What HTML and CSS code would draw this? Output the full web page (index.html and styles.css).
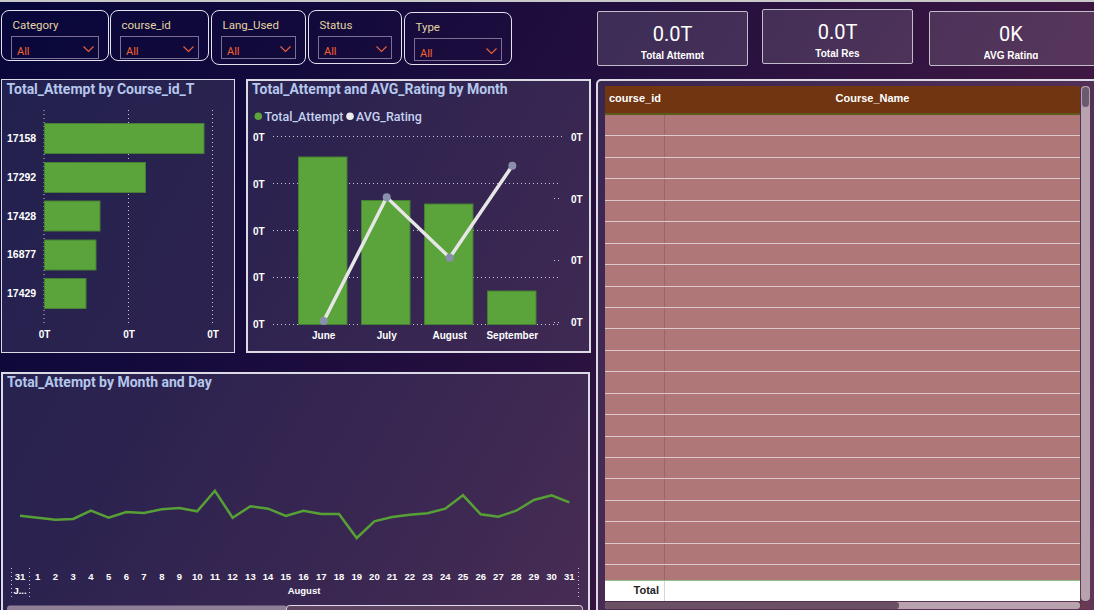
FILE: index.html
```html
<!DOCTYPE html>
<html>
<head>
<meta charset="utf-8">
<link rel="stylesheet" href="styles.css">
</head>
<body>
<div class="topline"></div>
<div class="top">
  <div class="slicer s1"><div class="slabel">Category</div><div class="dd"><span>All</span><svg class="chev" width="11" height="7" viewBox="0 0 11 7"><path d="M0.5 0.5 L5.5 5.5 L10.5 0.5"/></svg></div></div>
  <div class="slicer s2"><div class="slabel">course_id</div><div class="dd"><span>All</span><svg class="chev" width="11" height="7" viewBox="0 0 11 7"><path d="M0.5 0.5 L5.5 5.5 L10.5 0.5"/></svg></div></div>
  <div class="slicer s3"><div class="slabel">Lang_Used</div><div class="dd"><span>All</span><svg class="chev" width="11" height="7" viewBox="0 0 11 7"><path d="M0.5 0.5 L5.5 5.5 L10.5 0.5"/></svg></div></div>
  <div class="slicer s4"><div class="slabel">Status</div><div class="dd"><span>All</span><svg class="chev" width="11" height="7" viewBox="0 0 11 7"><path d="M0.5 0.5 L5.5 5.5 L10.5 0.5"/></svg></div></div>
  <div class="slicer s5"><div class="slabel">Type</div><div class="dd"><span>All</span><svg class="chev" width="11" height="7" viewBox="0 0 11 7"><path d="M0.5 0.5 L5.5 5.5 L10.5 0.5"/></svg></div></div>
  <div class="kpi k1"><div class="kval">0.0T</div><div class="klab">Total Attempt</div></div>
  <div class="kpi k2"><div class="kval">0.0T</div><div class="klab">Total Res</div></div>
  <div class="kpi k3"><div class="kval">0K</div><div class="klab">AVG Rating</div></div>
</div>

<div class="main">
  <div class="left">
    <div class="row1">
      <div class="panel c1">
        <div class="ptitle">Total_Attempt by Course_id_T</div>
        <svg class="plot" width="230" height="250" viewBox="0 0 230 250">
          <g class="grid">
            <line x1="42" y1="10" x2="42" y2="226"/>
            <line x1="126.5" y1="10" x2="126.5" y2="226"/>
            <line x1="210.5" y1="10" x2="210.5" y2="226"/>
          </g>
          <g class="bar">
            <rect x="42.5" y="23.5" width="159.5" height="30"/>
            <rect x="42.5" y="62.5" width="101" height="30"/>
            <rect x="42.5" y="101" width="55.5" height="30"/>
            <rect x="42.5" y="140" width="51.5" height="30"/>
            <rect x="42.5" y="178.5" width="41.5" height="30"/>
          </g>
          <g class="ylab">
            <text x="5" y="42">17158</text>
            <text x="5" y="81">17292</text>
            <text x="5" y="120">17428</text>
            <text x="5" y="158">16877</text>
            <text x="5" y="197">17429</text>
          </g>
          <g class="xlab">
            <text x="42.5" y="238">0T</text>
            <text x="127" y="238">0T</text>
            <text x="211" y="238">0T</text>
          </g>
        </svg>
      </div>
      <div class="panel c2">
        <div class="ptitle">Total_Attempt and AVG_Rating by Month</div>
        <svg class="plot" width="341" height="250" viewBox="0 0 341 250">
          <circle cx="10.3" cy="15.3" r="3.8" fill="#5ba33b"/>
          <text class="legend" x="16.5" y="19.6">Total_Attempt</text>
          <circle cx="102" cy="15.3" r="3.8" fill="#ececec"/>
          <text class="legend" x="108" y="19.6">AVG_Rating</text>
          <g class="grid">
            <line x1="25" y1="35.5" x2="315" y2="35.5"/>
            <line x1="25" y1="82.5" x2="313" y2="82.5"/>
            <line x1="25" y1="129.5" x2="313" y2="129.5"/>
            <line x1="25" y1="176.5" x2="313" y2="176.5"/>
            <line x1="25" y1="223.5" x2="313" y2="223.5"/>
            <line x1="306" y1="97.5" x2="313" y2="97.5"/>
            <line x1="306" y1="159.5" x2="313" y2="159.5"/>
            <line x1="306" y1="221.5" x2="313" y2="221.5"/>
          </g>
          <g class="ylab">
            <text x="5" y="40">0T</text>
            <text x="5" y="87">0T</text>
            <text x="5" y="134">0T</text>
            <text x="5" y="180">0T</text>
            <text x="5" y="227">0T</text>
            <text x="323" y="40">0T</text>
            <text x="323" y="101.5">0T</text>
            <text x="323" y="163">0T</text>
            <text x="323" y="225">0T</text>
          </g>
          <g class="bar">
            <rect x="50.5" y="56" width="48.5" height="167.5"/>
            <rect x="113.5" y="99.5" width="48.5" height="124"/>
            <rect x="176.5" y="103" width="48.5" height="120.5"/>
            <rect x="239.5" y="190" width="48.5" height="33.5"/>
          </g>
          <polyline class="rline" points="75.7,220 138.7,96.3 201.7,156.7 264.3,64.7"/>
          <g class="rdot">
            <circle cx="75.7" cy="220" r="4"/>
            <circle cx="138.7" cy="96.3" r="4"/>
            <circle cx="201.7" cy="156.7" r="4"/>
            <circle cx="264.3" cy="64.7" r="4"/>
          </g>
          <g class="xlab">
            <text x="75.7" y="237.5">June</text>
            <text x="138.7" y="237.5">July</text>
            <text x="201.7" y="237.5">August</text>
            <text x="264.3" y="237.5">September</text>
          </g>
        </svg>
      </div>
    </div>
    <div class="panel c3">
      <div class="ptitle">Total_Attempt by Month and Day</div>
      <svg class="plot" width="585" height="216" viewBox="0 0 585 216">
        <polyline class="gline" points="17,121.7 34.7,123.7 52.4,125.7 70.2,125 87.9,116.7 105.6,123.7 123.3,118 141,119 158.8,115.3 176.5,114 194.2,117.3 211.9,96.7 229.6,123.7 247.4,112.3 265.1,114.7 282.8,122 300.5,116.7 318.2,120 336,120 353.7,144 371.4,127.3 389.1,123 406.8,120.7 424.6,119.3 442.3,114.7 460,101.3 477.7,120.3 495.4,122.7 513.2,116.7 530.9,106 548.6,101.3 566.3,108.3"/>
        <g class="grid">
          <line x1="8.5" y1="174" x2="8.5" y2="206"/>
          <line x1="26.5" y1="174" x2="26.5" y2="206"/>
          <line x1="575.5" y1="174" x2="575.5" y2="206"/>
        </g>
        <g class="dlab">
          <text x="17" y="185.5">31</text><text x="34.7" y="185.5">1</text><text x="52.4" y="185.5">2</text><text x="70.2" y="185.5">3</text>
          <text x="87.9" y="185.5">4</text><text x="105.6" y="185.5">5</text><text x="123.3" y="185.5">6</text><text x="141" y="185.5">7</text>
          <text x="158.8" y="185.5">8</text><text x="176.5" y="185.5">9</text><text x="194.2" y="185.5">10</text><text x="211.9" y="185.5">11</text>
          <text x="229.6" y="185.5">12</text><text x="247.4" y="185.5">13</text><text x="265.1" y="185.5">14</text><text x="282.8" y="185.5">15</text>
          <text x="300.5" y="185.5">16</text><text x="318.2" y="185.5">17</text><text x="336" y="185.5">18</text><text x="353.7" y="185.5">19</text>
          <text x="371.4" y="185.5">20</text><text x="389.1" y="185.5">21</text><text x="406.8" y="185.5">22</text><text x="424.6" y="185.5">23</text>
          <text x="442.3" y="185.5">24</text><text x="460" y="185.5">25</text><text x="477.7" y="185.5">26</text><text x="495.4" y="185.5">27</text>
          <text x="513.2" y="185.5">28</text><text x="530.9" y="185.5">29</text><text x="548.6" y="185.5">30</text><text x="566.3" y="185.5">31</text>
          <text x="17" y="199.5">J...</text>
          <text x="301" y="199.5">August</text>
        </g>
        <rect class="sb1" x="4" y="211.5" width="280" height="10" rx="3"/>
        <rect class="sb2" x="283.5" y="211.5" width="296" height="10" rx="3"/>
      </svg>
    </div>
  </div>

  <div class="panel tbl">
    <div class="tgrid">
      <div class="table">
        <div class="thead"><div class="col1">course_id</div><div class="col2">Course_Name</div></div>
        <div class="tbody">
          <div class="trow"><div class="col1"></div><div class="col2"></div></div>
          <div class="trow"><div class="col1"></div><div class="col2"></div></div>
          <div class="trow"><div class="col1"></div><div class="col2"></div></div>
          <div class="trow"><div class="col1"></div><div class="col2"></div></div>
          <div class="trow"><div class="col1"></div><div class="col2"></div></div>
          <div class="trow"><div class="col1"></div><div class="col2"></div></div>
          <div class="trow"><div class="col1"></div><div class="col2"></div></div>
          <div class="trow"><div class="col1"></div><div class="col2"></div></div>
          <div class="trow"><div class="col1"></div><div class="col2"></div></div>
          <div class="trow"><div class="col1"></div><div class="col2"></div></div>
          <div class="trow"><div class="col1"></div><div class="col2"></div></div>
          <div class="trow"><div class="col1"></div><div class="col2"></div></div>
          <div class="trow"><div class="col1"></div><div class="col2"></div></div>
          <div class="trow"><div class="col1"></div><div class="col2"></div></div>
          <div class="trow"><div class="col1"></div><div class="col2"></div></div>
          <div class="trow"><div class="col1"></div><div class="col2"></div></div>
          <div class="trow"><div class="col1"></div><div class="col2"></div></div>
          <div class="trow"><div class="col1"></div><div class="col2"></div></div>
          <div class="trow"><div class="col1"></div><div class="col2"></div></div>
          <div class="trow"><div class="col1"></div><div class="col2"></div></div>
          <div class="trow"><div class="col1"></div><div class="col2"></div></div>
          <div class="trow"><div class="col1"></div><div class="col2"></div></div>
        </div>
        <div class="ttotal"><div class="col1">Total</div><div class="col2"></div></div>
      </div>
      <div class="vscroll"><div class="vthumb"></div></div>
      <div class="hscroll"><div class="hthumb"></div></div>
      <div class="corner"></div>
    </div>
  </div>
</div>
</body>
</html>
```

FILE: styles.css
```css
* { box-sizing: border-box; }
html, body { margin: 0; padding: 0; }
body {
  width: 1094px;
  height: 610px;
  overflow: hidden;
  font-family: Roboto, "Liberation Sans", sans-serif;
  background: linear-gradient(120deg, #08073a 0%, #140a3c 25%, #26103f 50%, #3c1742 75%, #4e1f45 100%);
  color: #fff;
}
.topline { height: 2px; background: #c9c9c9; }

.top {
  height: 77px;
  display: flex;
  align-items: flex-start;
  padding-left: 1px;
}
.top > * { flex: none; }
.slicer {
  border: 1.5px solid #e4e2ec;
  border-radius: 8px;
  padding-top: 7px;
  display: flex;
  flex-direction: column;
  margin-top: 8px;
}
.s1 { width: 108px; height: 51px; }
.s2 { width: 99px; height: 51px; margin-left: 1px; }
.s3 { width: 95px; height: 55px; margin-left: 2px; }
.s4 { width: 94px; height: 54px; margin-left: 2px; }
.s5 { width: 108px; height: 53px; margin-left: 2px; margin-top: 10px; }
.slabel {
  height: 14px;
  line-height: 14px;
  font-size: 11.5px;
  color: #e3d4a2;
  padding-left: 10.5px;
}
.dd {
  margin: 4px 9px 0 9px;
  height: 23px;
  border: 1px solid #7d6f94;
  display: flex;
  justify-content: space-between;
  align-items: flex-start;
  padding: 8px 4px 0 5px;
}
.dd span { font-size: 11px; line-height: 13px; color: #f4622e; }
.chev { margin-top: 1px; }
.chev path { fill: none; stroke: #e8603c; stroke-width: 1.2; }

.kpi {
  width: 151px;
  height: 55px;
  border: 1.5px solid #c3bccb;
  border-radius: 2px;
  background: rgba(255, 255, 255, 0.13);
  margin-top: 9px;
  padding-top: 9.5px;
  display: flex;
  flex-direction: column;
  align-items: center;
}
.k1 { margin-left: 85px; }
.k2 { margin-left: 14px; margin-top: 7px; }
.k3 { margin-left: 16px; width: 170px; padding-right: 6px; }
.kval { font-size: 20px; line-height: 24px; height: 24px; color: #fff; }
.klab {
  margin-top: 4px;
  height: 9.5px;
  overflow: hidden;
  font-family: "Liberation Sans", Arial, sans-serif;
  font-weight: 700;
  font-size: 10px;
  line-height: 12px;
  color: #fff;
}

.main { display: flex; align-items: flex-start; }
.main > * { flex: none; }
.left { margin-left: 1px; width: 590px; display: flex; flex-direction: column; }
.row1 { display: flex; gap: 11px; height: 274px; }
.row1 > * { flex: none; }
.panel {
  border: 2px solid #dcdae4;
  background: rgba(255, 255, 255, 0.1);
  display: flex;
  flex-direction: column;
  overflow: hidden;
}
.c1 { width: 234px; height: 274px; border-width: 1.5px; }
.c2 { width: 345px; height: 274px; }
.c3 { width: 589px; height: 240px; margin-top: 19px; }
.ptitle {
  height: 20px;
  line-height: 16px;
  padding: 0 4px;
  font-weight: 700;
  font-size: 14px;
  color: #b5c7ec;
  white-space: nowrap;
  flex: none;
}
.c1 .ptitle { padding-left: 4.5px; padding-top: 0.5px; }
.plot { display: block; flex: none; overflow: visible; }

.grid line { stroke: #c8c6d6; stroke-width: 1; stroke-dasharray: 1 3; }
.bar rect { fill: #5ba33b; stroke: #467f33; stroke-width: 1; }
.ylab text {
  font-family: "Liberation Sans", Arial, sans-serif;
  font-weight: 700;
  font-size: 10.5px;
  fill: #fff;
}
.c2 .ylab text { font-size: 10px; }
.xlab text {
  font-family: "Liberation Sans", Arial, sans-serif;
  font-weight: 700;
  font-size: 10px;
  fill: #fff;
  text-anchor: middle;
}
.legend {
  font-family: Roboto, sans-serif;
  font-weight: 500;
  font-size: 12.5px;
  fill: #c4d2f0;
}
.rline { fill: none; stroke: #e6e6e6; stroke-width: 3.5; stroke-linejoin: miter; }
.rdot circle { fill: #8a8fae; }
.gline { fill: none; stroke: #57a035; stroke-width: 2.5; stroke-linejoin: miter; }
.dlab text {
  font-family: "Liberation Sans", Arial, sans-serif;
  font-weight: 700;
  font-size: 9.5px;
  fill: #fff;
  text-anchor: middle;
}
.sb1 { fill: #8e7f97; }
.sb2 { fill: #5e4662; stroke: #e2dce8; stroke-width: 1; }

.tbl {
  margin-left: 5px;
  width: 502px;
  height: 533px;
  border-radius: 5px 0 0 0;
  padding: 5px 0 0 7px;
}
.tgrid {
  display: grid;
  grid-template-columns: 475px 9px;
  grid-template-rows: 515px 7px;
  column-gap: 1px;
  row-gap: 1px;
}
.table { display: flex; flex-direction: column; font-family: "Liberation Sans", Arial, sans-serif; }
.thead {
  height: 29px;
  background: #713511;
  border-bottom: 2px solid #5c5a1c;
  display: flex;
  font-weight: 700;
  font-size: 11px;
  color: #fff;
  flex: none;
}
.thead .col1 { width: 60px; padding: 5px 0 0 4px; line-height: 14px; }
.thead .col2 { flex: 1; text-align: center; padding-top: 5px; line-height: 14px; }
.tbody {
  height: 465px;
  overflow: hidden;
  background: #b07779;
  flex: none;
}
.trow {
  height: 21.45px;
  display: flex;
  border-bottom: 1px solid #dccaca;
}
.trow .col1 { width: 60px; border-right: 1px solid #9a646a; }
.trow .col2 { flex: 1; }
.ttotal {
  height: 21px;
  background: #fff;
  border-top: 1px solid #8ec38a;
  display: flex;
  flex: none;
}
.ttotal .col1 {
  width: 60px;
  border-right: 1px solid #d6d6d6;
  text-align: right;
  padding-right: 5px;
  font-weight: 700;
  font-size: 11px;
  line-height: 19px;
  color: #252423;
}
.vscroll {
  background: #b8a2ae;
  border-radius: 4px;
  padding: 1px;
}
.vthumb { height: 20px; background: #6b5a6e; border-radius: 4px; }
.hscroll {
  background: #b8a2ae;
  border-radius: 3px;
}
.hthumb { width: 294px; height: 7px; background: #6b4f62; border-radius: 3px; }
.corner { background: #6a3a50; }
```
